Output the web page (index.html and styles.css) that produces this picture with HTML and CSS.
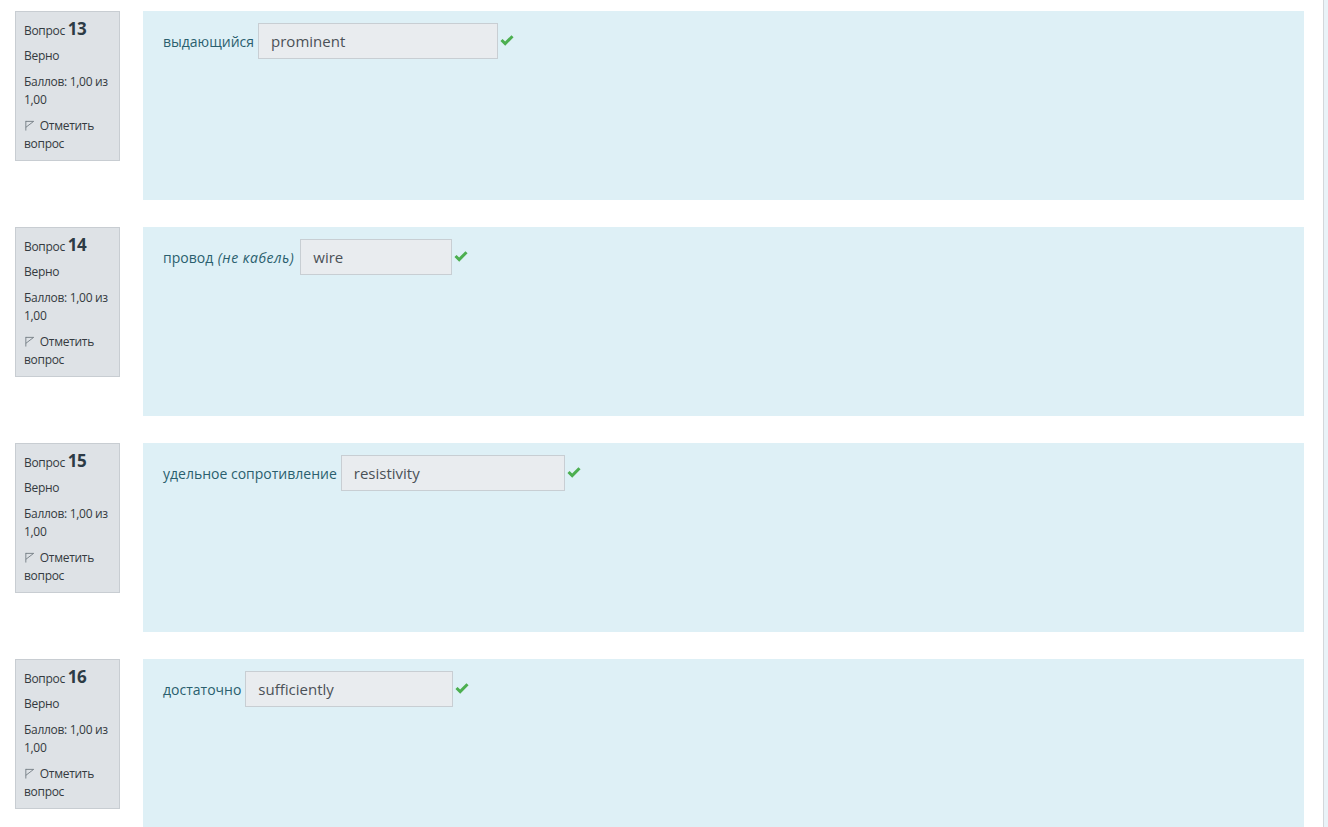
FILE: index.html
```html
<!DOCTYPE html>
<html lang="ru">
<head>
<meta charset="utf-8">
<title>Вопросы</title>
<link rel="stylesheet" href="styles.css">
</head>
<body>
<div class="page">
  <main class="main">
    <div class="que">
      <div class="info">
        <div class="no">Вопрос <span class="qno">13</span></div>
        <div class="state">Верно</div>
        <div class="grade">Баллов: 1,00 из 1,00</div>
        <div class="flag"><svg class="flagicon" viewBox="0 0 12 12" width="11" height="11"><path d="M2 11.5V1 M2 1.5 L10.5 1.5 L2 8" fill="none" stroke="#6a737b" stroke-width="0.9"/></svg> Отметить вопрос</div>
      </div>
      <div class="content">
        <div class="formulation">
          <span class="label">выдающийся</span>
          <span class="answer w240">prominent</span>
          <svg class="check" viewBox="0 0 14 12" width="14" height="12"><path d="M1.5 6 L5.2 9.6 L12.5 2.2" fill="none" stroke="#4caf50" stroke-width="3"/></svg>
        </div>
      </div>
    </div>
    <div class="que">
      <div class="info">
        <div class="no">Вопрос <span class="qno">14</span></div>
        <div class="state">Верно</div>
        <div class="grade">Баллов: 1,00 из 1,00</div>
        <div class="flag"><svg class="flagicon" viewBox="0 0 12 12" width="11" height="11"><path d="M2 11.5V1 M2 1.5 L10.5 1.5 L2 8" fill="none" stroke="#6a737b" stroke-width="0.9"/></svg> Отметить вопрос</div>
      </div>
      <div class="content">
        <div class="formulation">
          <span class="label">провод <em>(не кабель)</em></span>
          <span class="answer w152">wire</span>
          <svg class="check" viewBox="0 0 14 12" width="14" height="12"><path d="M1.5 6 L5.2 9.6 L12.5 2.2" fill="none" stroke="#4caf50" stroke-width="3"/></svg>
        </div>
      </div>
    </div>
    <div class="que">
      <div class="info">
        <div class="no">Вопрос <span class="qno">15</span></div>
        <div class="state">Верно</div>
        <div class="grade">Баллов: 1,00 из 1,00</div>
        <div class="flag"><svg class="flagicon" viewBox="0 0 12 12" width="11" height="11"><path d="M2 11.5V1 M2 1.5 L10.5 1.5 L2 8" fill="none" stroke="#6a737b" stroke-width="0.9"/></svg> Отметить вопрос</div>
      </div>
      <div class="content">
        <div class="formulation">
          <span class="label">удельное сопротивление</span>
          <span class="answer w224">resistivity</span>
          <svg class="check" viewBox="0 0 14 12" width="14" height="12"><path d="M1.5 6 L5.2 9.6 L12.5 2.2" fill="none" stroke="#4caf50" stroke-width="3"/></svg>
        </div>
      </div>
    </div>
    <div class="que">
      <div class="info">
        <div class="no">Вопрос <span class="qno">16</span></div>
        <div class="state">Верно</div>
        <div class="grade">Баллов: 1,00 из 1,00</div>
        <div class="flag"><svg class="flagicon" viewBox="0 0 12 12" width="11" height="11"><path d="M2 11.5V1 M2 1.5 L10.5 1.5 L2 8" fill="none" stroke="#6a737b" stroke-width="0.9"/></svg> Отметить вопрос</div>
      </div>
      <div class="content">
        <div class="formulation">
          <span class="label">достаточно</span>
          <span class="answer w208">sufficiently</span>
          <svg class="check" viewBox="0 0 14 12" width="14" height="12"><path d="M1.5 6 L5.2 9.6 L12.5 2.2" fill="none" stroke="#4caf50" stroke-width="3"/></svg>
        </div>
      </div>
    </div>
  </main>
  <aside class="drawer"></aside>
</div>
</body>
</html>
```
FILE: styles.css
```css
html, body {
  margin: 0;
  padding: 0;
  background: #ffffff;
  font-family: "Open Sans", "Liberation Sans", Arial, sans-serif;
  overflow: hidden;
}
.page {
  display: flex;
  height: 827px;
  overflow: hidden;
}
.main {
  width: 1323px;
  flex: none;
  padding: 11px 19px 0 15px;
  box-sizing: border-box;
  display: flex;
  flex-direction: column;
  gap: 27px;
}
.drawer {
  flex: 1;
  border-left: 1px solid #d3d7db;
  background: #e9f3f8;
}
.que {
  display: flex;
  align-items: flex-start;
  gap: 23px;
  flex: none;
}
.info {
  width: 105px;
  height: 150px;
  box-sizing: border-box;
  flex: none;
  background: #dee2e6;
  border: 1px solid #c8cdd2;
  padding: 7px 8px 0 8px;
  font-size: 12px;
  line-height: 18px;
  color: #343a40;
  letter-spacing: -0.3px;
}
.no {
  font-size: 12px;
  line-height: 20px;
}
.qno {
  font-size: 17px;
  font-weight: 700;
  color: #2d3b45;
  letter-spacing: -0.5px;
}
.state {
  margin-top: 6px;
}
.grade {
  margin-top: 8px;
}
.flag {
  margin-top: 8px;
}
.flagicon {
  vertical-align: -1px;
  margin-right: 2px;
}
.content {
  flex: 1;
  height: 189px;
  background: #def0f6;
  padding: 12px 20px;
  box-sizing: border-box;
}
.formulation {
  display: flex;
  align-items: center;
  color: #2a5f6e;
  font-size: 14px;
}
.label {
  margin-right: 4px;
}
.label em {
  font-style: italic;
  margin-left: 1px;
  letter-spacing: 0.5px;
  padding-right: 2px;
}
.answer {
  display: block;
  height: 36px;
  box-sizing: border-box;
  background: #e9ecef;
  border: 1px solid #c8ced3;
  padding: 0 12px;
  line-height: 34px;
  font-size: 15px;
  color: #4b5157;
}
.w240 { width: 240px; }
.w152 { width: 152px; }
.w224 { width: 224px; }
.w208 { width: 208px; }
.check {
  margin-left: 2px;
  margin-top: -3px;
}
```
